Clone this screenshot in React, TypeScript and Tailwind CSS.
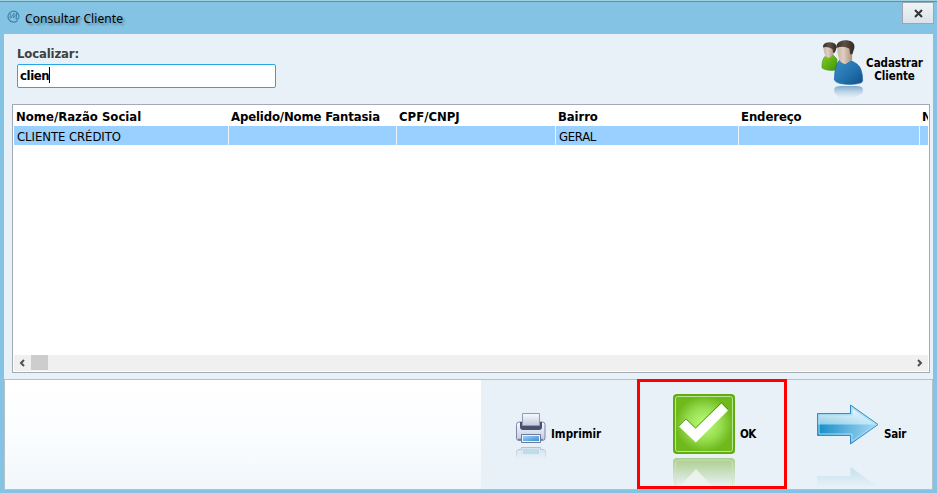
import React from "react";

const ui = "font-['DejaVu_Sans_Condensed','DejaVu_Sans',sans-serif] font-stretch-condensed whitespace-nowrap";
const head = "pl-[2px] text-[13px] leading-[18px]";

function Spiral() {
  return (
    <svg width="13" height="14" viewBox="0 0 13 14" fill="none" stroke="#347aa4">
      <path d="M10.500 11.500A5.500 5.500 0 1 1 12 7c0 3-2 4-3 2.500L10 4" strokeWidth="1.200" opacity=".85" />
      <path d="M3.500 4.500 4 9l3-5-.5 5L10 4M2.500 7.500l1 2" strokeWidth=".9" opacity=".8" />
    </svg>
  );
}

function People() {
  return (
    <svg width="44" height="62" viewBox="0 0 44 62">
      <defs>
        <linearGradient id="blue" x1="0" y1="0" x2="1" y2="1"><stop stopColor="#3f8fc4" /><stop offset=".55" stopColor="#2273b0" /><stop offset="1" stopColor="#134f86" /></linearGradient>
        <linearGradient id="green" x1="0" y1="0" x2="1" y2="1"><stop stopColor="#86cf22" /><stop offset="1" stopColor="#3d9506" /></linearGradient>
        <linearGradient id="skin" x1="0" x2="1"><stop stopColor="#c9b6a4" /><stop offset=".4" stopColor="#dfcfc2" /><stop offset="1" stopColor="#a98f7b" /></linearGradient>
        <linearGradient id="hair" x1="0" x2="1"><stop stopColor="#3a312c" /><stop offset=".45" stopColor="#5d5047" /><stop offset="1" stopColor="#35291f" /></linearGradient>
        <linearGradient id="bodyFade" x1="0" y1="46" x2="0" y2="59" gradientUnits="userSpaceOnUse"><stop stopColor="#7fa9cb" /><stop offset="1" stopColor="#b9d3e6" stopOpacity="0" /></linearGradient>
      </defs>
      <path d="M6 15.500Q1.500 19 2 28q5 3.500 15 2V19l-4-4z" fill="url(#green)" stroke="#439517" strokeWidth=".6" />
      <path d="M3.500 7q0 6 2 9 2 2.500 4.500 1.500l3.500-3 1-8q-5-3-11 .5Z" fill="url(#skin)" />
      <path d="M3 7.500Q2.500 2.500 9 2.300q7.500 0 7.700 5l-1.700 5.200-1.800.2-.8-3.700Q7 6 3 7.500Z" fill="url(#hair)" />
      <path d="M20 19.500Q14.500 25 14.300 40q2 3 6 3.500 12 2 20-.5 2.200-.5 2.400-2.500Q42.500 28 37 24l-6-3.500-6 4z" fill="url(#blue)" stroke="#17649d" strokeWidth=".6" />
      <path d="M17.300 7.500q-.3 8 2.700 13.500 2.500 3.500 6 2.500l6-3.500.5-12q-7-5-15.200-.5Z" fill="url(#skin)" />
      <path d="M16.500 8Q16 3 20 1.500 23 0 27 .3q8 .7 7.400 7.500L32.500 14l-2.200.6-1.100-6.100Q23 5.500 16.500 8Z" fill="url(#hair)" />
      <path d="M14.300 48q2-2 6-2h16q5 .2 6.400 2v5Q37 57 31 59H22Q16 56 14.300 52z" fill="url(#bodyFade)" />
    </svg>
  );
}

function Printer() {
  return (
    <svg width="32" height="48" viewBox="0 0 32 48">
      <defs>
        <linearGradient id="metal" x1="0" y1="0" x2="0" y2="1"><stop stopColor="#f8faff" /><stop offset="1" stopColor="#c3cade" /></linearGradient>
        <linearGradient id="paper" x1="0" y1="0" x2="1" y2="1"><stop stopColor="#9bd0f7" /><stop offset="1" stopColor="#3c8dd1" /></linearGradient>
        <linearGradient id="fadeWhite" x1="0" y1="35" x2="0" y2="47" gradientUnits="userSpaceOnUse"><stop stopColor="#acbfd0" /><stop offset="1" stopColor="#e8f1f8" /></linearGradient>
        <linearGradient id="fadeBody" x1="0" y1="35" x2="0" y2="47" gradientUnits="userSpaceOnUse"><stop stopColor="#d5e2ec" /><stop offset="1" stopColor="#e8f1f8" /></linearGradient>
      </defs>
      <path d="M1.500 12.500q0-2.500 2.500-2.500h23.500q2.500 0 2.500 2.500V26q0 2.500-2.500 2.500H4q-2.500 0-2.500-2.500z" fill="url(#metal)" stroke="#7f88a9" />
      <path d="M5 10h22v5q0 3-3 3H8q-3 0-3-3z" fill="#46516f" />
      <path d="M7.500 1.500h17v12h-17z" fill="url(#metal)" stroke="#919ab6" />
      <path d="M3 27.500h25" stroke="#7480a3" strokeWidth="1.500" />
      <path d="M6.500 22.500h19v8h-19z" fill="#e8f5ff" stroke="#6b799f" />
      <path d="M8 24h16v5H8z" fill="url(#paper)" />
      <path d="M1.500 47v-7q0-2.500 2.500-2.500h2.500v-2h19v2H28q2.500 0 2.500 2.500v7" fill="url(#fadeBody)" stroke="url(#fadeWhite)" />
      <path d="M8 37h16v5H8z" fill="#bfdcec" />
    </svg>
  );
}

function Check() {
  return (
    <svg width="62" height="93" viewBox="0 0 62 93">
      <defs>
        <radialGradient id="leaf"><stop stopColor="#baff79" /><stop offset=".6" stopColor="#96dc4f" /><stop offset="1" stopColor="#70b91d" /></radialGradient>
        <linearGradient id="leafFade" x1="0" y1="64" x2="0" y2="92" gradientUnits="userSpaceOnUse"><stop stopColor="#a9cd88" /><stop offset="1" stopColor="#e8f1f5" /></linearGradient>
      </defs>
      <rect width="62" height="60" rx="4" fill="#5fae0e" />
      <rect x="2.500" y="2.500" width="57" height="55" rx="2" fill="url(#leaf)" stroke="#bce498" />
      <path d="M6 32l7-7 9.500 9L48.500 8.500 55 15" fill="none" stroke="#509713" />
      <path d="M6 32.500l7-7 9.500 9.500L48.500 9.500l6.500 7L22.800 48.500z" fill="#fff" />
      <path d="M0 92V68q0-4 4-4h54q4 0 4 4v24z" fill="url(#leafFade)" />
      <path d="M2.500 92V69q0-3 3-3h51q3 0 3 3v23" fill="none" stroke="#d0e4c0" opacity=".8" />
      <path d="M7 92l16-17 16 17z" fill="#edf5f1" opacity=".85" />
    </svg>
  );
}

function Arrow() {
  return (
    <svg width="62" height="84" viewBox="0 0 62 84">
      <defs>
        <linearGradient id="arrowTop" x1="0" y1="0" x2="1" y2="0"><stop stopColor="#8dcbe7" /><stop offset="1" stopColor="#c7ecf9" /></linearGradient>
        <linearGradient id="arrowLow"><stop stopColor="#168dc8" /><stop offset="1" stopColor="#a9dcf5" /></linearGradient>
        <linearGradient id="gloss" x1="0" y1="0" x2="0" y2="1"><stop stopColor="#fff" stopOpacity=".75" /><stop offset="1" stopColor="#fff" stopOpacity="0" /></linearGradient>
        <linearGradient id="arrowFade" x1="0" y1="64" x2="0" y2="83" gradientUnits="userSpaceOnUse"><stop stopColor="#c4e1f0" /><stop offset="1" stopColor="#e7f1f7" /></linearGradient>
      </defs>
      <path d="M.5 9.500h33V1L61 20.500 33.500 40v-8.500H.5z" fill="url(#arrowLow)" />
      <path d="M.5 9.500h33V1L61 20.500H.5z" fill="url(#arrowTop)" />
      <path d="M2 11h33V4l22 16H2z" fill="url(#gloss)" />
      <path d="M2 11h33V4l24 16.500L35 37v-7H2z" fill="none" stroke="#a8ddf5" />
      <path d="M.5 9.500h33V1L61 20.500 33.500 40v-8.500H.5z" fill="none" stroke="#348dc7" />
      <path d="M0 83V72h33.500v-9l28 20z" fill="url(#arrowFade)" />
    </svg>
  );
}

export default function App() {
  return (
    <div className={`relative flex h-[493px] w-[937px] flex-col overflow-hidden border-t border-[#9fd3e0] bg-[#84c3e3] font-bold text-black ${ui}`}>
      <header className="flex h-[33px] shrink-0 items-start border-t border-[#5793aa] pl-[7px]">
        <div className="pt-[7px]"><Spiral /></div>
        <h1 className="ml-[5px] mt-[8px] font-['Noto_Sans',sans-serif] text-[12px] leading-[18px] font-normal tracking-[0.08px] [text-shadow:2px_2px_2px_#33555f88]">Consultar Cliente</h1>
        <button className="ml-auto mr-[3px] flex h-[22px] w-8 items-center justify-center border border-[#9ba6ae] bg-linear-to-b from-[#eff3f6] to-[#dae3ea]">
          <svg width="9" height="9" viewBox="0 0 9 9"><path d="m1 1 7 7m0-7-7 7" stroke="#333" strokeWidth="2" /></svg>
        </button>
      </header>

      <main className="ml-1 flex h-[456px] w-[929px] shrink-0 flex-col bg-[#e8f1f8]">
        <section className="flex h-[70px] shrink-0 justify-between">
          <div className="pl-[13px] pt-[11px]">
            <label className="block text-[13px] leading-[18px] tracking-[-0.15px] text-[#404040]">Localizar:</label>
            <div className="mt-px flex h-6 w-[259px] items-start rounded-[2px] border border-[#27a8e6] bg-white pl-[2px] pt-[2px]">
              <span className="text-[13px] leading-[17px] tracking-[-0.4px]">clien</span><span className="h-4 w-px bg-black" />
            </div>
          </div>
          <div className="flex pr-[10px] pt-[6px]">
            <People />
            <div className="ml-[2px] w-[57px] pt-[17px] text-center text-[11.5px] leading-[13px] tracking-[-0.05px]">Cadastrar<br />Cliente</div>
          </div>
        </section>

        <section className="ml-2 flex h-[269px] w-[918px] shrink-0 flex-col border border-[#a3aab1] bg-white px-px">
          <div className="grid h-[21px] shrink-0 grid-cols-[215px_168px_159px_183px_181px_8px] overflow-hidden pt-[3px]">
            <div className={head}>Nome/Razão Social</div>
            <div className={`${head} tracking-[-0.14px]`}>Apelido/Nome Fantasia</div>
            <div className={head}>CPF/CNPJ</div>
            <div className={`${head} tracking-[-0.1px]`}>Bairro</div>
            <div className={`${head} tracking-[-0.1px]`}>Endereço</div>
            <div className={`${head} overflow-hidden`}>N</div>
          </div>
          <div className="grid h-[19px] shrink-0 grid-cols-[215px_168px_159px_183px_181px_8px] bg-[#99d0ff] text-[13px] leading-[19px] font-normal">
            <div className="border-r border-[#edf4f7] pl-[3px] pt-px tracking-[-0.07px]">CLIENTE CRÉDITO</div>
            <div className="border-r border-[#edf4f7]" />
            <div className="border-r border-[#edf4f7]" />
            <div className="border-r border-[#edf4f7] pl-[3px] pt-px tracking-[-0.3px]">GERAL</div>
            <div className="border-r border-[#edf4f7]" />
            <div />
          </div>
          <div className="mt-auto mb-px flex h-4 shrink-0 items-center bg-[#f0f0f0] px-[5px]">
            <svg width="6" height="8"><path d="M5 1 2 4l3 3" fill="none" stroke="#505050" strokeWidth="2" /></svg>
            <div className="ml-[6px] h-[15px] w-[17px] self-start bg-[#cdcdcd]" />
            <svg className="ml-auto" width="6" height="8"><path d="m1 1 3 3-3 3" fill="none" stroke="#505050" strokeWidth="2" /></svg>
          </div>
        </section>

        <footer className="mt-[6px] flex h-[111px] shrink-0 overflow-hidden border border-[#b2c2cb] text-[11.5px] leading-[18px]">
          <div className="w-[476px] shrink-0 bg-linear-to-b from-white via-[#fbfdff] to-[#f1f7fb]" />
          <div className="ml-[34px] flex h-[109px] w-[121px] shrink-0 pt-[32px]"><Printer /><span className="ml-[4px] mt-[13px]">Imprimir</span></div>
          <div className="ml-[37px] flex h-[109px] w-[83px] shrink-0 pt-[14px]"><Check /><span className="ml-[5px] mt-[31px] tracking-[-0.6px]">OK</span></div>
          <div className="ml-[61px] flex h-[109px] shrink-0 pt-[24px]"><Arrow /><span className="ml-[5px] mt-[21px] tracking-[-0.2px]">Sair</span></div>
        </footer>
      </main>
      <div className="pointer-events-none absolute left-[637px] top-[378px] h-[110px] w-[150px] border-3 border-[#ff0000]" />
    </div>
  );
}
